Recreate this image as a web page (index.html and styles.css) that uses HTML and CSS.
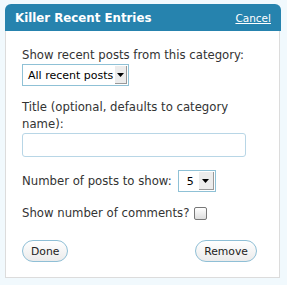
FILE: index.html
```html
<!DOCTYPE html>
<html lang="en">
<head>
  <meta charset="UTF-8" />
  <title>Killer Recent Entries</title>
  <link rel="stylesheet" href="styles.css">
</head>
<body>
  <div class="widget">
    <div class="widget-top">
      <h3 class="widget-title">Killer Recent Entries</h3>
      <a href="#" class="cancel">Cancel</a>
    </div>

    <div class="widget-inside">
      <div class="field">
        <label>Show recent posts from this category:</label>
        <div class="select select-cat">
          <span class="select-text">All recent posts</span>
          <span class="select-arrow"><svg width="7" height="4" viewBox="0 0 7 4"><path d="M0 0h7L3.5 4z" fill="#000"/></svg></span>
        </div>
      </div>

      <div class="field">
        <label>Title (optional, defaults to category name):</label>
        <input type="text" class="text-input">
      </div>

      <div class="field row">
        <label>Number of posts to show:</label>
        <div class="select select-num">
          <span class="select-text">5</span>
          <span class="select-arrow"><svg width="7" height="4" viewBox="0 0 7 4"><path d="M0 0h7L3.5 4z" fill="#000"/></svg></span>
        </div>
      </div>

      <div class="field row check-row">
        <label>Show number of comments?</label>
        <span class="checkbox"></span>
      </div>

      <div class="actions">
        <button class="btn">Done</button>
        <button class="btn">Remove</button>
      </div>
    </div>
  </div>
</body>
</html>
```

FILE: styles.css
```css
body {
  font-family: "DejaVu Sans", Verdana, sans-serif;
  background: #f1f9fd;
  margin: 0;
  padding: 4px 6px 0 5px;
  color: #333;
}

.widget {
  width: 276px;
}

.widget-top {
  background: #2683ae;
  height: 27px;
  border-radius: 6px 6px 0 0;
  display: flex;
  align-items: center;
  justify-content: space-between;
  padding: 0 10px 0 10px;
}

.widget-title {
  margin: 0;
  color: white;
  font-size: 11.8px;
  font-weight: bold;
}

.cancel {
  color: white;
  font-size: 10.5px;
  text-decoration: underline;
}

.widget-inside {
  background: white;
  border: 1px solid #dcdcdc;
  border-top: none;
  margin-right: 1px;
  height: 247px;
  box-sizing: border-box;
  padding: 16px 16px 0 16px;
  font-size: 11.7px;
}

.field {
  margin-bottom: 13px;
}

.field label {
  display: block;
  line-height: 17px;
}

.row {
  display: flex;
  align-items: center;
}

.row label {
  margin-right: 6px;
}

.check-row {
  margin-bottom: 18px;
}

.check-row label {
  margin-right: 5px;
}

.select {
  display: inline-flex;
  align-items: center;
  height: 22px;
  box-sizing: border-box;
  border: 1px solid #8fc1d6;
  background: white;
  color: #000;
  font-size: 11px;
  padding-left: 5px;
  gap: 2px;
  white-space: nowrap;
}

.select-cat {
  width: 107px;
}

.select-num {
  width: 38px;
  padding-left: 8px;
}

.select-text {
  flex: 1;
}

.select-arrow {
  width: 15px;
  height: 18px;
  margin-right: 1px;
  background: #ececec;
  border-right: 1px solid #999;
  border-bottom: 1px solid #999;
  box-sizing: border-box;
  display: flex;
  align-items: center;
  justify-content: center;
}

.text-input {
  display: block;
  width: 224px;
  height: 24px;
  box-sizing: border-box;
  border: 1px solid #b8d6e6;
  border-radius: 3px;
  margin: 0;
}

.checkbox {
  width: 11px;
  height: 11px;
  border: 1px solid #777;
  border-radius: 2px;
  background: linear-gradient(#fff, #ddd);
}

.actions {
  display: flex;
  justify-content: space-between;
  padding-right: 6px;
}

.btn {
  font-family: inherit;
  font-size: 10.8px;
  color: #222;
  height: 22px;
  padding: 0 8px;
  border: 1px solid #8fbfd6;
  border-radius: 11px;
  background: linear-gradient(#fff, #ebebeb);
}
```
